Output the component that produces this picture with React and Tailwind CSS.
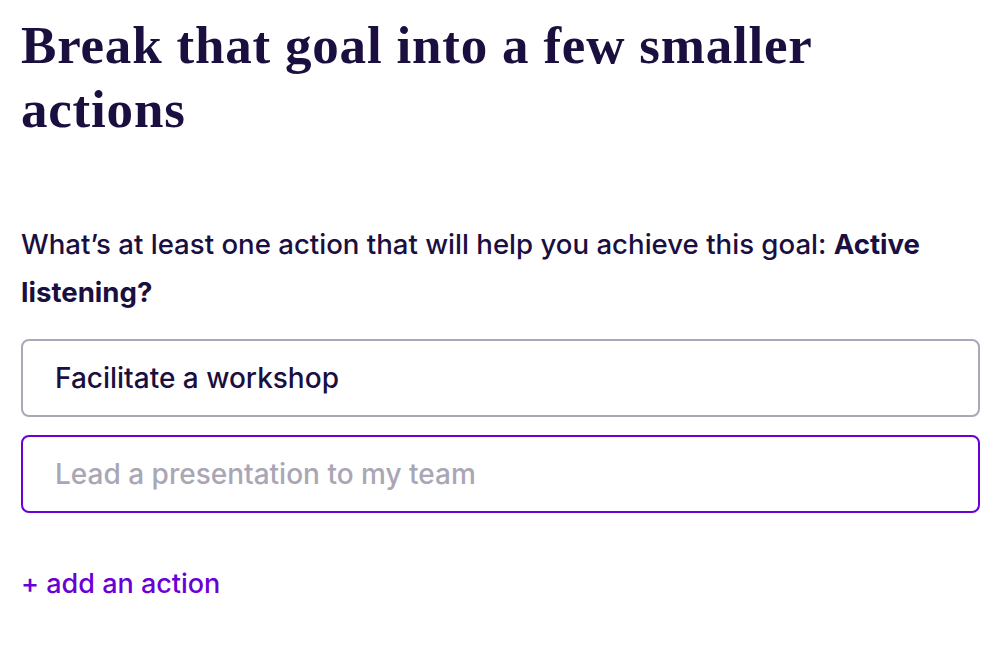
export default function App() {
  return (
    <div className="w-[1004px] h-[650px] bg-white overflow-hidden px-[21px] pt-[13px]">
      <h1
        className="text-[53px] leading-[64px] font-bold tracking-[0.8px] text-[#1b0f3f] w-[880px]"
        style={{ fontFamily: '"Liberation Serif", serif' }}
      >
        Break that goal into a few smaller actions
      </h1>
      <div style={{ fontFamily: 'Inter, sans-serif' }}>
        <p className="mt-[79px] text-[27.6px] leading-[48px] font-medium text-[#1b0f3f] w-[959px]">
          What’s at least one action that will help you achieve this goal: <b className="font-bold">Active listening?</b>
        </p>
        <div className="mt-[23px] w-[959px] h-[78px] border-2 border-[#aaa7b8] rounded-[8px] flex items-center px-[32px] text-[28px] font-medium text-[#1b0f3f]">
          Facilitate a workshop
        </div>
        <div className="mt-[18px] w-[959px] h-[78px] border-2 border-[#6b00d6] rounded-[8px] flex items-center px-[32px] text-[28px] font-medium text-[#a9a6b6]">
          Lead a presentation to my team
        </div>
        <div className="mt-[54px] text-[27px] leading-[34px] font-medium text-[#6b00d6]">+ add an action</div>
      </div>
    </div>
  );
}
